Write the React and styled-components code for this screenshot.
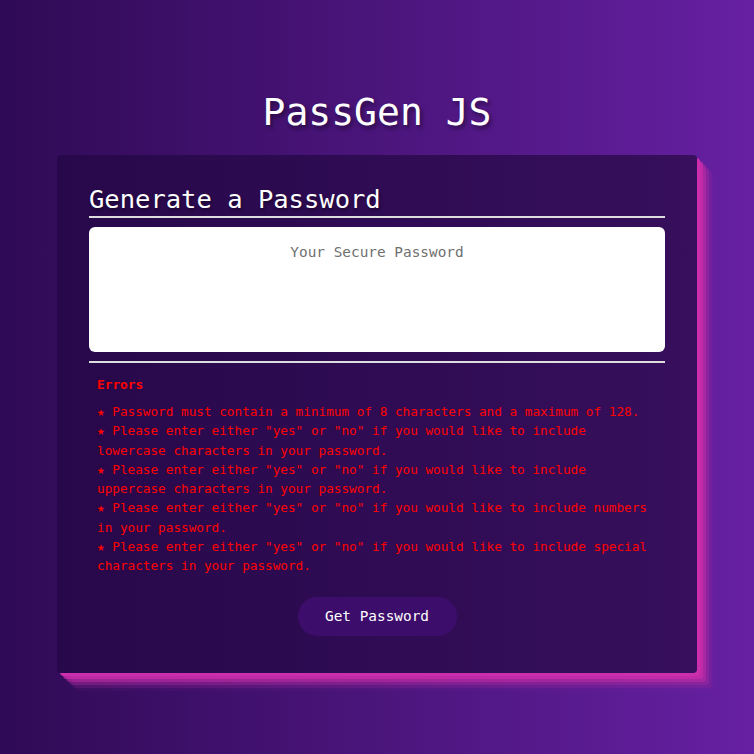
import styled, { createGlobalStyle } from "styled-components";

const GlobalStyle = createGlobalStyle`
  html, body {
    margin: 0;
    padding: 0;
  }
  body {
    font-family: "DejaVu Sans Mono", "Liberation Mono", monospace;
  }
`;

const errors = [
  "★ Password must contain a minimum of 8 characters and a maximum of 128.",
  '★ Please enter either "yes" or "no" if you would like to include lowercase characters in your password.',
  '★ Please enter either "yes" or "no" if you would like to include uppercase characters in your password.',
  '★ Please enter either "yes" or "no" if you would like to include numbers in your password.',
  '★ Please enter either "yes" or "no" if you would like to include special characters in your password.',
];

export default function App() {
  return (
    <Page>
      <GlobalStyle />
      <Title>PassGen JS</Title>
      <Card>
        <CardHeader>Generate a Password</CardHeader>
        <Output readOnly placeholder="Your Secure Password" />
        <Divider />
        <ErrorBox>
          <ErrorTitle>Errors</ErrorTitle>
          <ErrorList>
            {errors.map((e) => (
              <ErrorItem key={e}>{e}</ErrorItem>
            ))}
          </ErrorList>
        </ErrorBox>
        <Footer>
          <GenerateButton>Get Password</GenerateButton>
        </Footer>
      </Card>
    </Page>
  );
}

const Page = styled.div`
  min-height: 754px;
  background: linear-gradient(to right, #2f0a55, #6620a2);
  display: flex;
  flex-direction: column;
  align-items: center;
  box-sizing: border-box;
  padding-top: 88px;
`;

const Title = styled.h1`
  margin: 0 0 19px;
  font-family: "DejaVu Sans Mono", "Liberation Mono", monospace;
  font-weight: 400;
  font-size: 38px;
  line-height: 48px;
  color: #fff;
  text-shadow: 2px 3px 4px rgba(0, 0, 0, 0.45);
`;

const Card = styled.div`
  width: 640px;
  box-sizing: border-box;
  padding: 28px 32px 37px;
  border-radius: 4px;
  background: linear-gradient(to right, #27084a, #370f5c);
  box-shadow: 3px 3px 0 #cc2fae, 6px 6px 0 rgba(200, 44, 170, 0.8),
    9px 9px 0 rgba(190, 44, 165, 0.55), 12px 12px 0 rgba(180, 44, 160, 0.35),
    15px 15px 0 rgba(170, 44, 160, 0.2), 18px 18px 0 rgba(160, 44, 160, 0.08);
`;

const CardHeader = styled.h2`
  margin: 0;
  padding-bottom: 1px;
  font-family: "DejaVu Sans Mono", "Liberation Mono", monospace;
  font-weight: 400;
  font-size: 25.5px;
  line-height: 32px;
  color: #fff;
  border-bottom: 2px solid #ddd;
  text-shadow: 1px 2px 3px rgba(0, 0, 0, 0.4);
`;

const Output = styled.textarea`
  display: block;
  width: 100%;
  height: 125px;
  margin-top: 9px;
  box-sizing: border-box;
  padding: 15px 10px;
  border: none;
  border-radius: 6px;
  background: #fff;
  resize: none;
  outline: none;
  text-align: center;
  font-family: "DejaVu Sans Mono", "Liberation Mono", monospace;
  font-size: 14.4px;
  line-height: 20px;

  &::placeholder {
    color: #6f6f6f;
  }
`;

const Divider = styled.div`
  height: 2px;
  margin-top: 9px;
  background: #ddd;
`;

const ErrorBox = styled.div`
  padding: 12px 8px 0;
  color: #f00;
`;

const ErrorTitle = styled.div`
  font-size: 12.8px;
  line-height: 19px;
  font-weight: 700;
  margin-bottom: 8px;
`;

const ErrorList = styled.div`
  font-size: 12.7px;
  line-height: 19.3px;
`;

const ErrorItem = styled.div``;

const Footer = styled.div`
  display: flex;
  justify-content: center;
  margin-top: 21px;
`;

const GenerateButton = styled.button`
  width: 159px;
  height: 39px;
  border: none;
  border-radius: 20px;
  background: #3d0d6c;
  color: #fff;
  font-family: "DejaVu Sans Mono", "Liberation Mono", monospace;
  font-size: 14.4px;
  cursor: pointer;
`;
